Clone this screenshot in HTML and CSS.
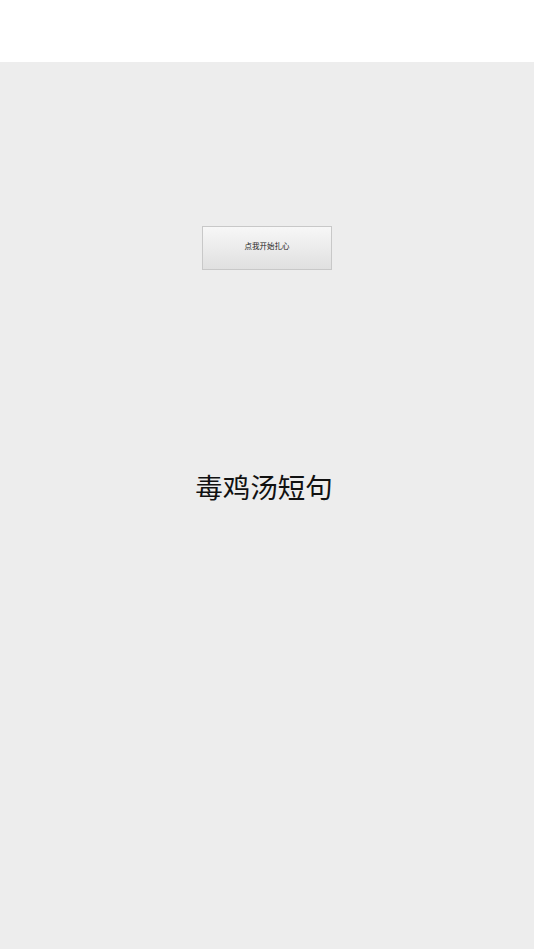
FILE: index.html
```html
<!DOCTYPE html>
<html lang="zh-CN">
<head>
    <meta charset="UTF-8">
    <meta name="viewport" content="width=device-width, initial-scale=1.0">
    <title>毒鸡汤短句</title>
    <link rel="stylesheet" href="styles.css">
</head>
<body>
    <div class="header"></div>
    <div class="main">
        <div class="button-area">
            <button class="start-btn">点我开始扎心</button>
        </div>
        <div class="result-area">
            <p class="quote">毒鸡汤短句</p>
        </div>
    </div>
</body>
</html>
```

FILE: styles.css
```css
* {
    margin: 0;
    padding: 0;
    box-sizing: border-box;
}

html, body {
    height: 100%;
}

body {
    font-family: "Noto Sans CJK SC", "Noto Sans", sans-serif;
    background: #ededed;
    color: #111;
    display: flex;
    flex-direction: column;
}

.header {
    height: 62px;
    background: #fff;
    flex-shrink: 0;
}

.main {
    flex: 1;
    background: #ededed;
}

.button-area {
    display: flex;
    justify-content: center;
    padding-top: 164px;
}

.start-btn {
    width: 130px;
    height: 44px;
    padding-bottom: 5px;
    border: 1px solid #c8c8c8;
    background: linear-gradient(#f7f7f7, #e0e0e0);
    font-family: "Noto Sans CJK SC", sans-serif;
    font-size: 7.5px;
    color: #222;
    cursor: pointer;
}

.result-area {
    display: flex;
    justify-content: center;
    padding-top: 196px;
    padding-right: 6px;
}

.quote {
    font-size: 27.5px;
    line-height: 40px;
    color: #111;
}
```
